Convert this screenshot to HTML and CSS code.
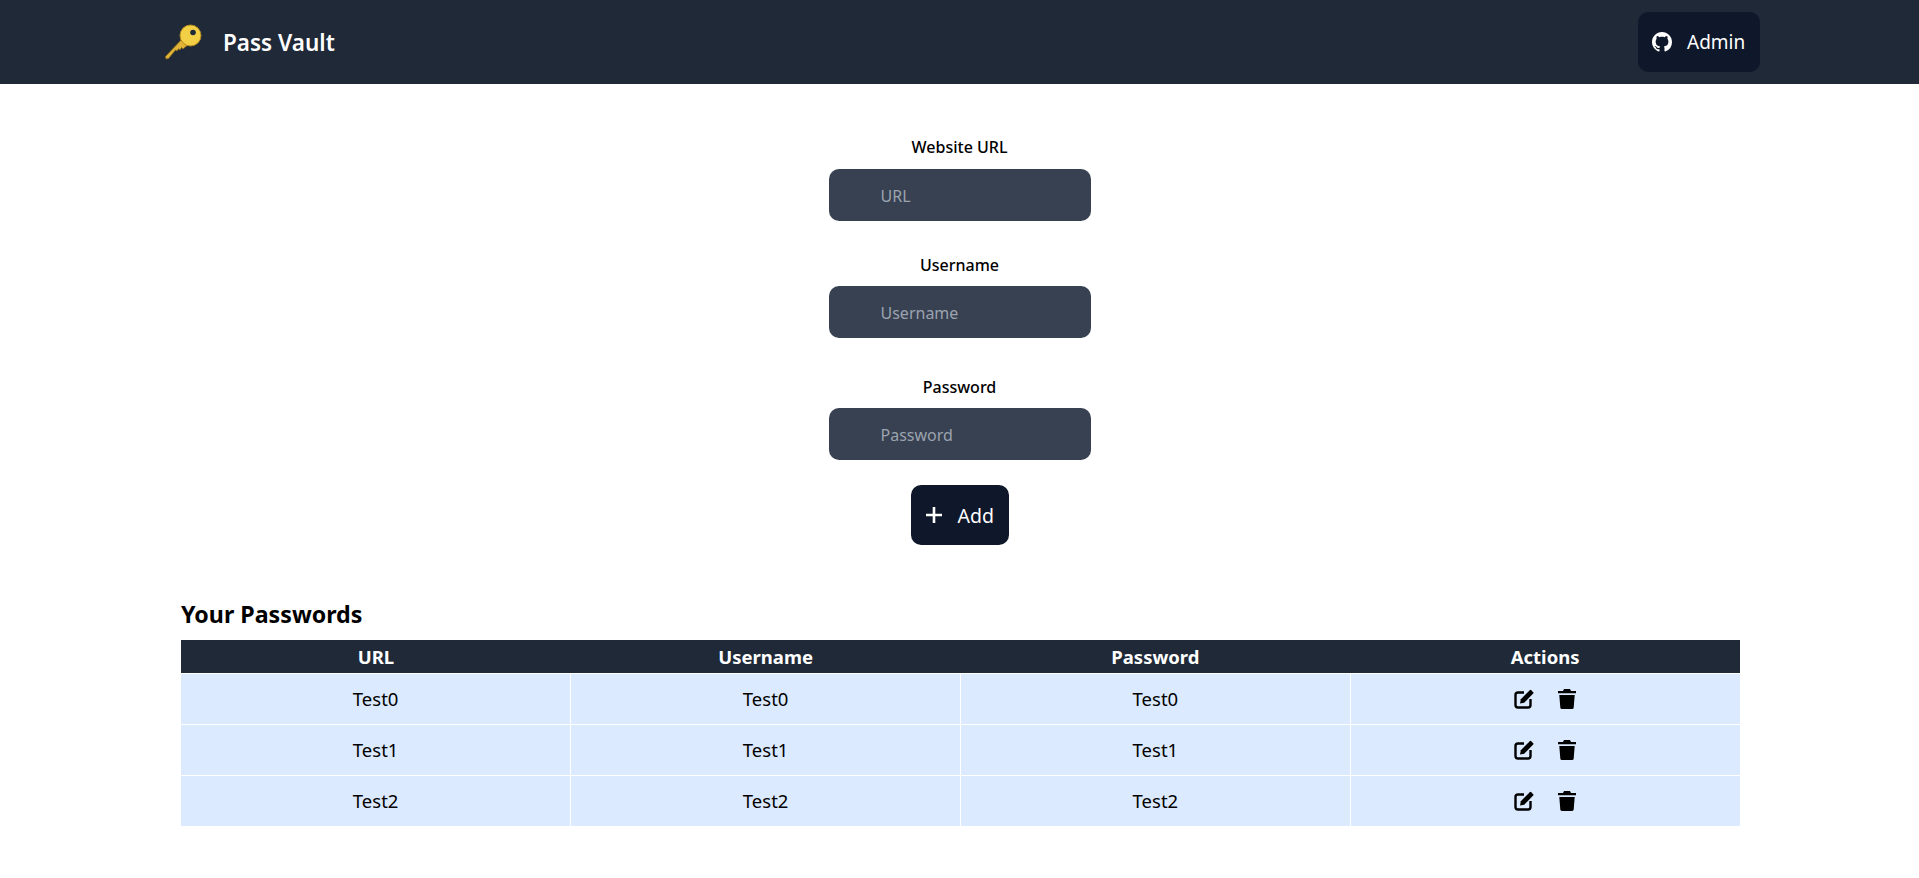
FILE: index.html
```html
<!DOCTYPE html>
<html lang="en">

<head>
    <meta charset="UTF-8">
    <meta name="viewport" content="width=device-width, initial-scale=1.0">

    <title>Pass Vault</title>
    <link rel="stylesheet" href="styles.css">
</head>

<body>
    <nav class="navbar">
        <div class="brand">
            <svg class="key-icon" viewBox="0 0 38 36" aria-hidden="true">
                <path d="M1.500 32.500 L20 13 L26 19 L19 25 L17.500 23.500 L16 26 L14.500 24.800 L13 27 L11.500 26 L4.500 34.500 L2 35 Z" fill="#e0b437" stroke="#8a6a1c" stroke-width=".8" />
                <circle cx="26.500" cy="11.500" r="10.500" fill="#f3cf45" stroke="#b58c22" stroke-width="1" />
                <circle cx="29" cy="8.500" r="2.800" fill="#1f2937" />
            </svg>
            <span class="brand-name">Pass Vault</span>
        </div>
        <button class="dark-btn admin-btn" type="button">
            <svg class="github-icon" viewBox="0 0 16 16" aria-hidden="true">
                <path fill="#fff" d="M8 0C3.58 0 0 3.58 0 8c0 3.54 2.29 6.53 5.47 7.59.4.07.55-.17.55-.38 0-.19-.01-.82-.01-1.49-2.01.37-2.53-.49-2.69-.94-.09-.23-.48-.94-.82-1.13-.28-.15-.68-.52-.01-.53.63-.01 1.08.58 1.23.82.72 1.21 1.87.87 2.33.66.07-.52.28-.87.51-1.07-1.78-.2-3.64-.89-3.64-3.95 0-.87.31-1.59.82-2.15-.08-.2-.36-1.02.08-2.12 0 0 .67-.21 2.2.82.64-.18 1.32-.27 2-.27.68 0 1.36.09 2 .27 1.53-1.04 2.2-.82 2.2-.82.44 1.1.16 1.92.08 2.12.51.56.82 1.27.82 2.15 0 3.07-1.87 3.75-3.65 3.95.29.25.54.73.54 1.48 0 1.07-.01 1.93-.01 2.2 0 .21.15.46.55.38A8.013 8.013 0 0016 8c0-4.42-3.58-8-8-8z" />
            </svg>
            Admin
        </button>
    </nav>

    <main>
        <form class="entry-form">
            <label for="url">Website URL</label>
            <input class="field" type="text" id="url" placeholder="URL">

            <label class="label-user" for="username">Username</label>
            <input class="field" type="text" id="username" placeholder="Username">

            <label class="label-pass" for="password">Password</label>
            <input class="field" type="password" id="password" placeholder="Password">

            <button class="dark-btn add-btn" type="button">
                <svg class="plus-icon" viewBox="0 0 18 18" aria-hidden="true">
                    <path d="M9 1v16M1 9h16" stroke="#fff" stroke-width="2.600" />
                </svg>
                Add
            </button>
        </form>

        <section class="passwords">
            <h2>Your Passwords</h2>
            <table>
                <thead>
                    <tr>
                        <th>URL</th>
                        <th>Username</th>
                        <th>Password</th>
                        <th>Actions</th>
                    </tr>
                </thead>
                <tbody>
                    <tr>
                        <td>Test0</td>
                        <td>Test0</td>
                        <td>Test0</td>
                        <td>
                            <div class="actions">
                                <svg class="edit-icon" viewBox="0 0 20 20"><use href="#edit" /></svg>
                                <svg class="trash-icon" viewBox="0 0 18 20"><use href="#trash" /></svg>
                            </div>
                        </td>
                    </tr>
                    <tr>
                        <td>Test1</td>
                        <td>Test1</td>
                        <td>Test1</td>
                        <td>
                            <div class="actions">
                                <svg class="edit-icon" viewBox="0 0 20 20"><use href="#edit" /></svg>
                                <svg class="trash-icon" viewBox="0 0 18 20"><use href="#trash" /></svg>
                            </div>
                        </td>
                    </tr>
                    <tr>
                        <td>Test2</td>
                        <td>Test2</td>
                        <td>Test2</td>
                        <td>
                            <div class="actions">
                                <svg class="edit-icon" viewBox="0 0 20 20"><use href="#edit" /></svg>
                                <svg class="trash-icon" viewBox="0 0 18 20"><use href="#trash" /></svg>
                            </div>
                        </td>
                    </tr>
                </tbody>
            </table>
        </section>
    </main>

    <!-- shared icons for the action column -->
    <svg class="icon-defs" aria-hidden="true">
        <symbol id="edit" viewBox="0 0 20 20">
            <path d="M10 3.500H4A2.500 2.500 0 0 0 1.500 6v10A2.500 2.500 0 0 0 4 18.500h10a2.500 2.500 0 0 0 2.500-2.500v-6" fill="none" stroke="#000" stroke-width="2.400" />
            <path d="M6 14.500l.8-4.300L15.800 1.200a1 1 0 0 1 1.400 0l2 2a1 1 0 0 1 0 1.400L10.200 13.700z" fill="#000" />
        </symbol>
        <symbol id="trash" viewBox="0 0 18 20">
            <path d="M6 0h6l1 2h5v2.200H0V2h5z" fill="#000" />
            <path d="M1.300 6h15.400L15.700 18.500A1.600 1.600 0 0 1 14.100 20H3.900a1.600 1.600 0 0 1-1.600-1.500z" fill="#000" />
        </symbol>
    </svg>
</body>

</html>
```

FILE: styles.css
```css
* {
    box-sizing: border-box;
}

body {
    margin: 0;
    font-family: "Noto Sans", "Open Sans", sans-serif;
    font-size: 16px;
    color: #000;
    background-color: #fff;
}

.navbar {
    display: flex;
    justify-content: space-between;
    align-items: center;
    height: 84px;
    padding: 0 159px 0 164px;
    background-color: #1f2937;
}

.brand {
    display: flex;
    align-items: center;
    gap: 21px;
}

.key-icon {
    width: 38px;
    height: 36px;
}

.brand-name {
    font-size: 22.500px;
    font-weight: 600;
    color: #fff;
}

.dark-btn {
    display: flex;
    align-items: center;
    border: none;
    border-radius: 10px;
    color: #fff;
    background-color: #0f172a;
    font-family: inherit;
    cursor: pointer;
}

.admin-btn {
    gap: 15px;
    width: 122px;
    height: 60px;
    padding: 0 14px;
    font-size: 19px;
}

.github-icon {
    width: 20px;
    height: 20px;
}

.entry-form {
    display: flex;
    flex-direction: column;
    align-items: center;
    padding-top: 51px;
}

label {
    margin-bottom: 10px;
    font-size: 16px;
    font-weight: 500;
    line-height: 24px;
}

.label-user {
    margin-top: 32px;
    margin-bottom: 9px;
}

.label-pass {
    margin-top: 37px;
    margin-bottom: 9px;
}

.field {
    width: 262px;
    height: 52px;
    padding: 2px 0 0 52px;
    border: none;
    border-radius: 10px;
    background-color: #374151;
    color: #fff;
    font-family: inherit;
    font-size: 16px;
}

.field::placeholder {
    color: #9ca3af;
    opacity: 1;
}

.add-btn {
    gap: 15px;
    width: 98px;
    height: 60px;
    margin-top: 25px;
    padding: 0 14px;
    font-size: 19.500px;
}

.plus-icon {
    width: 18px;
    height: 18px;
}

.passwords {
    margin: 0 179px 0 181px;
    padding-top: 53px;
}

h2 {
    margin: 0 0 10px;
    font-size: 23.200px;
    font-weight: 700;
    line-height: 32px;
}

table {
    width: 100%;
    table-layout: fixed;
    border-collapse: collapse;
}

th {
    height: 33px;
    padding: 0;
    background-color: #1f2937;
    color: #fff;
    font-size: 18.500px;
    font-weight: 700;
}

td {
    height: 51px;
    padding: 0;
    border: 1px solid #fff;
    background-color: #dbeafe;
    text-align: center;
    font-size: 18.500px;
}

tr:last-child td {
    border-bottom: none;
}

td:first-child {
    border-left: none;
}

td:last-child {
    border-right: none;
}

.actions {
    display: flex;
    justify-content: center;
    gap: 24px;
}

.edit-icon {
    width: 20px;
    height: 20px;
}

.trash-icon {
    width: 18px;
    height: 20px;
}

.icon-defs {
    display: none;
}
```
